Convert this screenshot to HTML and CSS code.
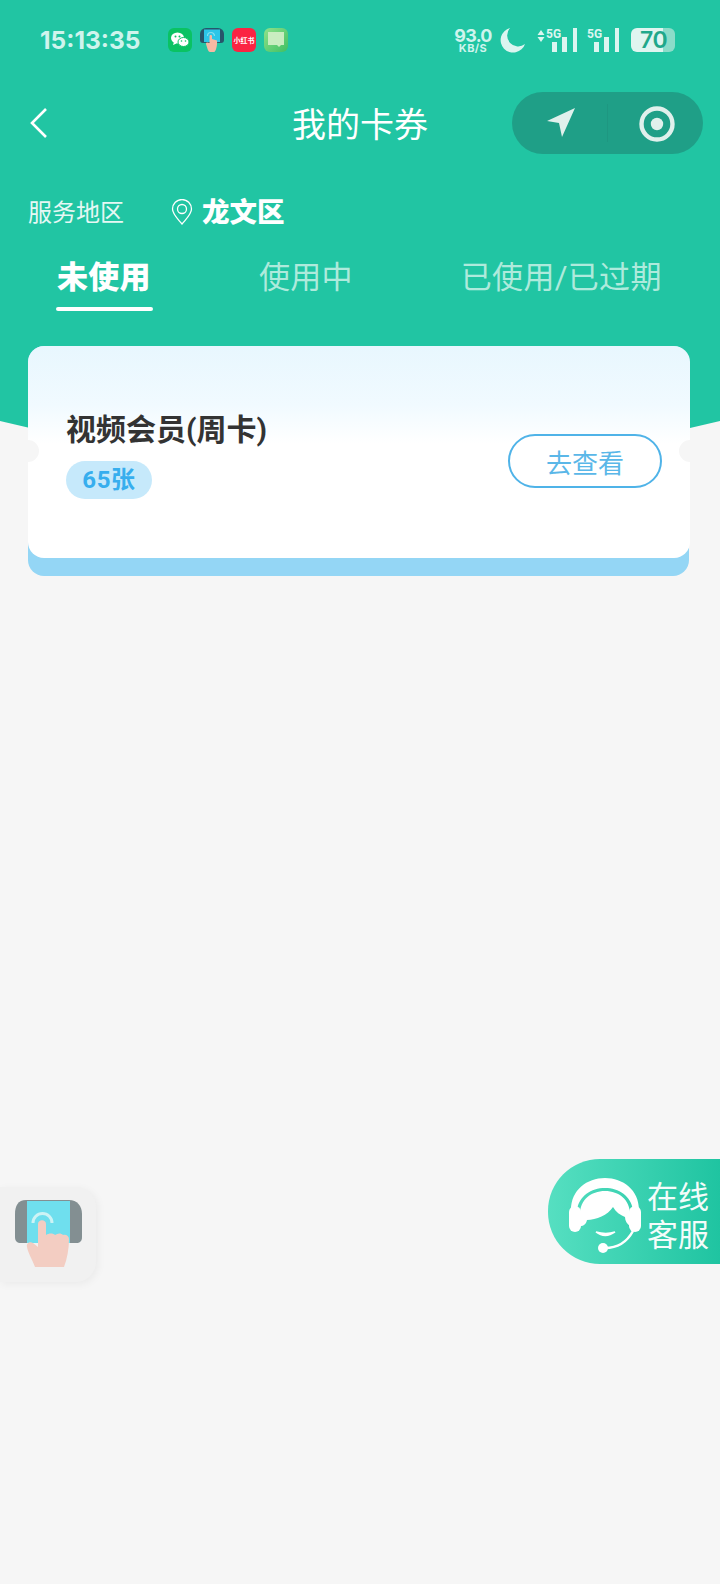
FILE: index.html
```html
<!DOCTYPE html>
<html lang="zh-CN">
<head>
  <meta charset="UTF-8" />
  <meta name="viewport" content="width=device-width, initial-scale=1.0"/>
  <title>我的卡券</title>
  <link rel="stylesheet" href="styles.css">
</head>
<body>
  <header class="hero">
    <!-- Status bar -->
    <div class="status-bar">
      <span class="clock">15:13:35</span>
      <div class="app-icons">
        <span class="app wechat">
          <svg viewBox="0 0 24 24" width="24" height="24">
            <ellipse cx="9.500" cy="10" rx="6.500" ry="5.500" fill="#fff"/>
            <path d="M6 14l-1 3 3.500-1.500z" fill="#fff"/>
            <ellipse cx="15.500" cy="14" rx="5.500" ry="4.500" fill="#fff" stroke="#0ac263" stroke-width="1"/>
            <circle cx="7.500" cy="8.500" r="1" fill="#0ac263"/>
            <circle cx="11.500" cy="8.500" r="1" fill="#0ac263"/>
            <circle cx="13.500" cy="13" r=".8" fill="#0ac263"/>
            <circle cx="17.500" cy="13" r=".8" fill="#0ac263"/>
          </svg>
        </span>
        <span class="app">
          <svg viewBox="0 0 24 24" width="24" height="24">
            <rect x="0" y="0" width="24" height="15" rx="3" fill="#27566b"/>
            <rect x="4" y="1.500" width="16" height="12.500" fill="#2cc6e8"/>
            <path d="M7.500 8a3.500 3.500 0 0 1 7 0" fill="none" stroke="#7fe0f0" stroke-width="1.200"/>
            <path d="M9.500 8c0-1.500 2.500-1.500 2.500 0v3l5 1.500c.5 4-1 11.500-3 11.500h-4c-2 0-3-5-4-8 0-2 2-1.500 3.500-1z" fill="#f5b9a3"/>
          </svg>
        </span>
        <span class="app rednote">小红书</span>
        <span class="app message">
          <svg viewBox="0 0 24 24" width="24" height="24">
            <path d="M4 4h16v13h-3l-2 2-2-2H4z" fill="#c9edc0"/>
          </svg>
        </span>
      </div>
      <div class="indicators">
        <div class="speed"><span class="speed-num">93.0</span><span class="speed-unit">KB/S</span></div>
        <svg class="moon" viewBox="0 0 26 26" width="26" height="26">
          <path d="M10 1a12.500 12.500 0 1 0 15 16A11 11 0 0 1 10 1z" fill="#dcf5f0"/>
        </svg>
        <div class="sim first">
          <svg class="arrows" viewBox="0 0 8 12" width="8" height="12"><path d="M4 0l3.500 5H.5zM4 12L.5 7h7z" fill="#dcf5f0"/></svg>
          <span class="sim-label">5G</span>
          <svg class="bars" viewBox="0 0 25 24" width="25" height="24">
            <path d="M0 14h5v10H0zM10 9h5v15h-5zM21 0h4v24h-4z" fill="#dcf5f0"/>
          </svg>
        </div>
        <div class="sim">
          <span class="sim-label">5G</span>
          <svg class="bars" viewBox="0 0 25 24" width="25" height="24">
            <path d="M0 14h5v10H0zM10 9h5v15h-5zM21 0h4v24h-4z" fill="#dcf5f0"/>
          </svg>
        </div>
        <div class="battery">70</div>
      </div>
    </div>

    <!-- Title bar -->
    <div class="nav">
      <svg class="back" viewBox="0 0 20 32" width="20" height="32">
        <path d="M17 2L3 16l14 14" fill="none" stroke="#fff" stroke-width="2.600"/>
      </svg>
      <h1 class="page-title">我的卡券</h1>
      <div class="capsule">
        <div class="capsule-part">
          <svg class="capsule-arrow" viewBox="0 0 30 30" width="30" height="30">
            <path d="M29 0L1 13l12 2 3 14z" fill="#e0f0ec"/>
          </svg>
        </div>
        <div class="capsule-part">
          <svg class="capsule-target" viewBox="0 0 38 38" width="38" height="38">
            <circle cx="19" cy="19" r="15.500" fill="none" stroke="#e0f0ec" stroke-width="4.400"/>
            <circle cx="19" cy="19" r="6.200" fill="#e0f0ec"/>
          </svg>
        </div>
      </div>
    </div>

    <!-- Service area -->
    <div class="region">
      <span class="region-label">服务地区</span>
      <svg class="region-pin" viewBox="0 0 22 26" width="22" height="26">
        <path d="M11 25C6 19 1.500 15 1.500 10a9.500 9.500 0 0 1 19 0c0 5-4.500 9-9.500 15z" fill="none" stroke="#fff" stroke-width="1.300"/>
        <circle cx="11" cy="10" r="4.500" fill="none" stroke="#fff" stroke-width="1.300"/>
      </svg>
      <span class="region-name">龙文区</span>
    </div>

    <!-- Tabs -->
    <nav class="tabs">
      <a class="tab active">未使用</a>
      <a class="tab">使用中</a>
      <a class="tab">已使用/已过期</a>
    </nav>
  </header>

  <main class="list">
    <div class="coupon">
      <div class="coupon-body">
        <div class="coupon-info">
          <div class="coupon-name">视频会员(周卡)</div>
          <span class="coupon-count">65张</span>
        </div>
        <button class="coupon-btn">去查看</button>
      </div>
    </div>
  </main>

  <!-- Floating buttons -->
  <div class="float-tool">
    <svg viewBox="0 0 75 75" width="75" height="75">
      <path d="M16 5h43c8 0 13 6 13 14v23c0 4-2 6-6 6H11c-4 0-6-2-6-6V19C5 11 8 5 16 5z" fill="#838f92"/>
      <rect x="17" y="6" width="43" height="42" fill="#6fdfee"/>
      <path d="M23 28a9.500 9.500 0 0 1 19 0" fill="none" stroke="#cdf3f5" stroke-width="3"/>
      <path d="M28 29c0-5 8-5 8 0v11c3-2 7-2 9 0 3-2 6-2 8 0 3-1 6 1 6 4 0 10-2 20-5 28H25c-3-8-7-14-8-20-1-4 3-6 6-4l5 4z" fill="#f3cdc2"/>
    </svg>
  </div>
  <div class="float-service">
    <svg class="service-icon" viewBox="0 0 90 90" width="90" height="90">
      <rect x="9" y="36" width="12" height="26" rx="6" fill="#fff"/>
      <rect x="69" y="36" width="12" height="26" rx="6" fill="#fff"/>
      <path d="M11 40C11 20 27 8 45 8s34 12 34 32h-6C71 26 59 18 45 18S19 26 17 40z" fill="#fff"/>
      <path d="M20 56V44C20 30 31 21 45 21s25 9 25 23v12c-3-2-5-5-5-9-5-2-9-5-12-10-5 8-17 13-26 13-1 4-3 6-7 6z" fill="#fff"/>
      <path d="M36 62q9 7 19 0q-9 3-19 0z" fill="#fff" stroke="#fff" stroke-width="1.500"/>
      <circle cx="43" cy="78" r="5" fill="#fff"/>
      <path d="M45 78c12 0 22-6 28-17" fill="none" stroke="#fff" stroke-width="2.500"/>
    </svg>
    <div class="service-text">在线<br>客服</div>
  </div>
</body>
</html>
```

FILE: styles.css
```css
* {
  box-sizing: border-box;
}
body {
  margin: 0;
  height: 1584px;
  overflow: hidden;
  position: relative;
  background-color: #f6f6f6;
  font-family: Roboto, "Noto Sans CJK SC", sans-serif;
}
.hero {
  height: 440px;
  background-color: #21c5a3;
  color: #fff;
  clip-path: polygon(0 0, 100% 0, 100% 421px, 660px 435px, 60px 435px, 0 421px);
}

/* status bar */
.status-bar {
  height: 80px;
  padding: 0 45px 0 40px;
  display: flex;
  align-items: center;
}
.clock {
  font-family: Inter, sans-serif;
  font-size: 24.5px;
  font-weight: 700;
  color: #cff4ed;
  width: 128px;
}
.app-icons {
  display: flex;
  gap: 8px;
}
.app {
  width: 24px;
  height: 24px;
  border-radius: 6px;
  overflow: hidden;
  display: flex;
  align-items: center;
  justify-content: center;
}
.wechat {
  background-color: #0ac263;
}
.rednote {
  background-color: #fb2443;
  color: #fff;
  font-size: 7px;
  font-weight: 700;
  white-space: nowrap;
}
.message {
  background: linear-gradient(135deg, #8fe28a, #3fbf63);
}
.indicators {
  margin-left: auto;
  display: flex;
  align-items: center;
}
.speed {
  width: 42px;
  display: flex;
  flex-direction: column;
  align-items: center;
  font-family: Inter, sans-serif;
  font-weight: 700;
  color: #cff4ed;
}
.speed-num {
  font-size: 18px;
  line-height: 16px;
  letter-spacing: -0.8px;
}
.speed-unit {
  font-size: 11px;
  line-height: 9px;
  letter-spacing: 0.4px;
}
.moon {
  margin-left: 6px;
}
.sim {
  display: flex;
  align-items: flex-start;
  height: 24px;
  margin-left: 10px;
  color: #dcf5f0;
}
.sim.first {
  margin-left: 11px;
}
.arrows {
  margin: 2px 1px 0 0;
}
.sim-label {
  width: 16px;
  font-size: 12px;
  font-weight: 700;
  line-height: 13px;
}
.bars {
  margin-left: -9px;
}
.sim.first .bars {
  margin-left: -10px;
}
.battery {
  width: 44px;
  height: 24px;
  margin-left: 12px;
  border-radius: 6px;
  background: linear-gradient(90deg, #dff5f0 72%, #8bdcc9 72%);
  color: #1fa88b;
  font-family: Inter, sans-serif;
  font-size: 23px;
  font-weight: 600;
  line-height: 24px;
  padding-left: 9px;
  letter-spacing: -0.5px;
}

/* title bar */
.nav {
  margin-top: 12px;
  height: 62px;
  padding: 0 17px;
  display: grid;
  grid-template-columns: 1fr auto 1fr;
  align-items: center;
}
.back {
  margin-left: 12px;
}
.page-title {
  margin: 0 0 2px;
  font-size: 34px;
  font-weight: 400;
}
.capsule {
  justify-self: end;
  width: 191px;
  height: 62px;
  border-radius: 31px;
  background-color: #1f9f87;
  display: flex;
}
.capsule-part {
  flex: 1;
  display: flex;
  align-items: center;
  justify-content: center;
}
.capsule-part:first-child {
  border-right: 1px solid #1e9781;
  margin: 12px 0;
}
.capsule-arrow {
  margin-left: 3px;
}
.capsule-target {
  margin: 2px 0 0 2px;
}

/* service area */
.region {
  margin-top: 37px;
  padding-left: 28px;
  height: 38px;
  display: flex;
  align-items: center;
}
.region-label {
  font-size: 24px;
  color: #e6f8f4;
  width: 143px;
}
.region-pin {
  margin-top: 3px;
}
.region-name {
  margin-left: 9px;
  font-size: 27.5px;
  font-weight: 900;
}

/* tabs */
.tabs {
  margin-top: 27px;
  padding-left: 57px;
  display: flex;
  gap: 108px;
}
.tab {
  font-size: 31px;
  line-height: 44px;
  height: 55px;
  color: #aeeadc;
  position: relative;
  white-space: nowrap;
  letter-spacing: 0.3px;
}
.tab.active {
  color: #fff;
  font-weight: 900;
}
.tab.active::after {
  content: "";
  position: absolute;
  left: -1px;
  right: -2px;
  bottom: 0;
  height: 4px;
  border-radius: 2px;
  background-color: #fff;
}

/* coupon card */
.list {
  margin-top: -94px;
  padding: 0 31px 0 28px;
  position: relative;
}
.coupon {
  background-color: #94d6f5;
  border-radius: 16px;
  padding-bottom: 18px;
}
.coupon-body {
  position: relative;
  height: 212px;
  margin-right: -1px;
  padding: 18px 28px 0 38px;
  border-radius: 16px;
  background: linear-gradient(180deg, #e8f7fe 0, #f1faff 28%, #fff 46%);
  display: flex;
  align-items: center;
  justify-content: space-between;
}
.coupon-body::before,
.coupon-body::after {
  content: "";
  position: absolute;
  top: 94px;
  width: 22px;
  height: 22px;
  border-radius: 50%;
  background-color: #f6f6f6;
}
.coupon-body::before {
  left: -11px;
}
.coupon-body::after {
  right: -11px;
}
.coupon-info {
  margin-bottom: 12px;
}
.coupon-name {
  font-size: 30px;
  font-weight: 700;
  line-height: 36px;
  color: #333;
  margin-bottom: 13px;
  padding-top: 1px;
}
.coupon-count {
  display: inline-block;
  width: 86px;
  height: 38px;
  border-radius: 19px;
  background-color: #c6e9fb;
  color: #37aeee;
  font-size: 24px;
  font-weight: 700;
  line-height: 38px;
  letter-spacing: 0.6px;
  text-align: center;
}
.coupon-btn {
  width: 154px;
  height: 54px;
  border: 2px solid #4fb3e8;
  border-radius: 27px;
  background-color: #fff;
  color: #5ab7e8;
  font-family: inherit;
  font-size: 26px;
}

/* floating buttons */
.float-tool {
  position: absolute;
  left: 0;
  top: 1187px;
  width: 96px;
  height: 95px;
  padding: 8px 0 0 10px;
  background-color: #f1f1f1;
  border-radius: 0 20px 20px 0;
  box-shadow: 2px 2px 8px rgba(0, 0, 0, 0.05);
}
.float-service {
  position: absolute;
  right: 0;
  top: 1159px;
  width: 172px;
  height: 105px;
  border-radius: 52px 0 0 52px;
  background: linear-gradient(90deg, #56dfc1, #1fc4a1);
  display: flex;
  align-items: center;
  padding-left: 12px;
  color: #fff;
}
.service-icon {
  margin-top: 7px;
}
.service-text {
  margin: 11px 0 0 -3px;
  font-size: 31px;
  line-height: 38px;
  opacity: 0.95;
}
```
